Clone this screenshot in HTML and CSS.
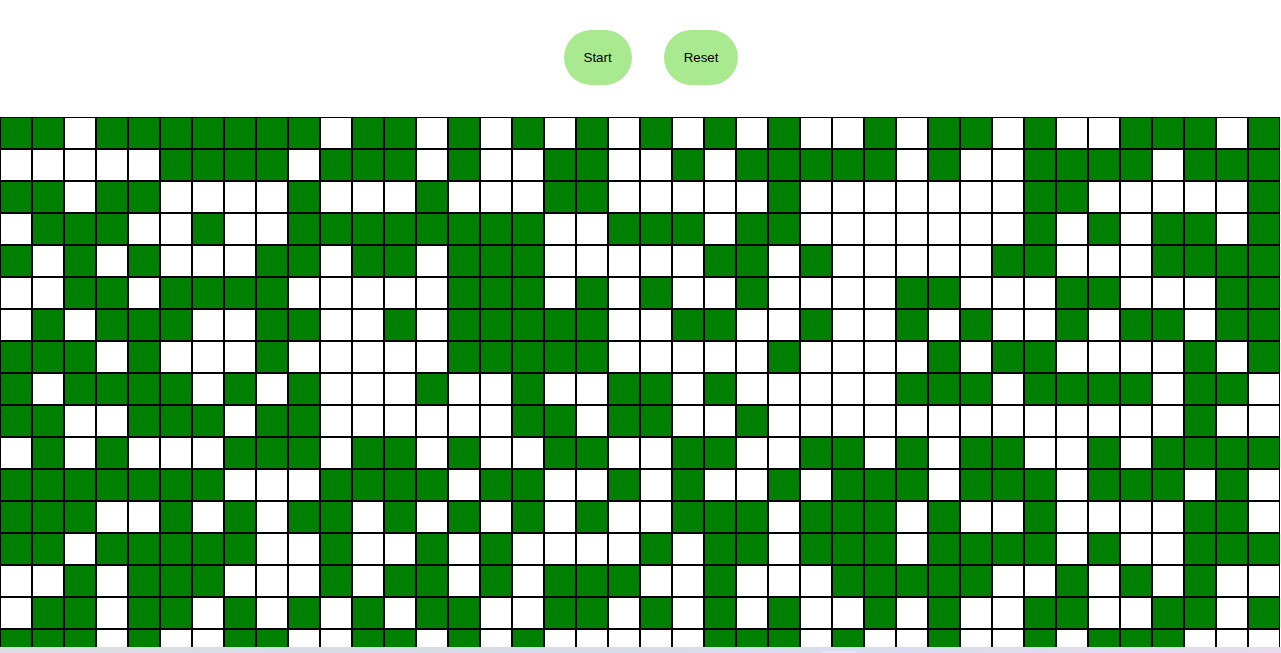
FILE: index.html
```html
<!DOCTYPE html>
<html lang="en">
<head>
<meta charset="utf-8">
<title>Game of Life</title>
<link rel="stylesheet" href="styles.css">
</head>
<body>
<div class="app">
  <header class="controls">
    <button class="control" type="button">Start</button>
    <button class="control" type="button">Reset</button>
  </header>
  <main class="board-area">
    <div class="board" id="board"></div>
  </main>
  <div class="strip"></div>
</div>
<script src="grid.js"></script>
</body>
</html>
```
FILE: styles.css
```css
* {
  box-sizing: border-box;
}

html,
body {
  margin: 0;
  height: 100%;
  background: #fff;
  overflow: hidden;
}

.app {
  display: flex;
  flex-direction: column;
  height: 100vh;
}

.controls {
  display: flex;
  flex: none;
  justify-content: center;
  gap: 32px;
  padding: 30px 0 32px 21px;
}

.control {
  padding: 20px;
  border: 0;
  border-radius: 30px;
  background: #a9e98f;
  color: #000;
  font: 13.333px/15px "Liberation Sans", Arial, sans-serif;
}

.board-area {
  flex: 1;
  min-height: 0;
  overflow: hidden;
}

.board {
  display: grid;
  grid-template-columns: repeat(40, 32px);
  grid-auto-rows: 32px;
}

.cell {
  border: 1px solid #000;
  background: #fff;
}

.cell.alive {
  background: #008000;
}

.strip {
  flex: none;
  height: 6px;
  background:
    linear-gradient(#e3e6f3, #e3e6f3) 822px 100% / 34px 2px no-repeat,
    linear-gradient(90deg, #dddde3 0%, #d6dbe9 40%, #d9dcf0 70%, #e8daf2 100%);
}
```
FILE: grid.js
```js
var rows = [
  "1101111111011010101010101001011010011101",
  "0000011110111010011001011111010011110111",
  "1101100001000100011000001000000011000001",
  "0111001001111111100111011000000010101101",
  "1010100011011011100000110100000110001111",
  "0011011110000011101010010000110001100011",
  "0101110011001011111001100100101001011011",
  "1110100010000011111000001000010110000101",
  "1011110101000100100110100000111011110110",
  "1100111011000000110110010000000000000100",
  "0101000111011010011001100110101100101111",
  "1111111000111101100101001011101110111010",
  "1110010101101010101001110111010010000110",
  "1101111100100101000010110111011110100111",
  "0010111000101101011100100011111001010100",
  "0110110101010110011010101001010011001101",
  "1110100110011010100000111010010010111000"
];

var board = document.getElementById("board");
rows.forEach(function (row) {
  row.split("").forEach(function (state) {
    var cell = document.createElement("div");
    cell.className = state === "1" ? "cell alive" : "cell";
    board.appendChild(cell);
  });
});
```
